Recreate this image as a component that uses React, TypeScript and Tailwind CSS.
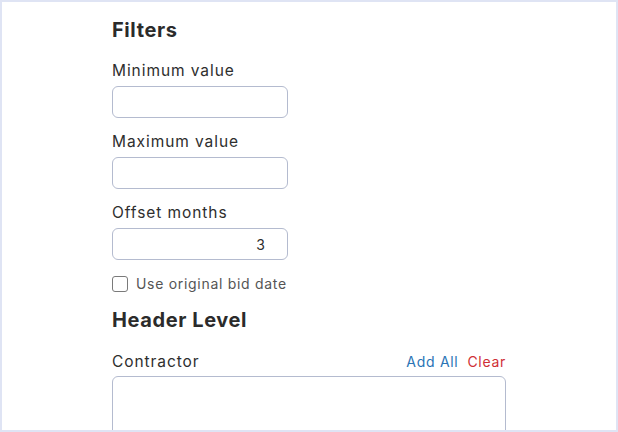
import React, { useState } from 'react';

interface NumberFieldProps {
  label: string;
  value: string;
  onChange: (v: string) => void;
  alignRight?: boolean;
}

function NumberField({ label, value, onChange, alignRight = false }: NumberFieldProps) {
  return (
    <div className="mt-4 flex flex-col">
      <label className="text-[15.5px] leading-[22px] text-[#2e2e2e] tracking-[0.06em]">{label}</label>
      <input
        value={value}
        onChange={(e) => onChange(e.target.value)}
        className={`mt-1 h-8 w-[176px] rounded-md border border-[#b4bbcf] px-3 text-sm text-[#2e2e2e] outline-none ${
          alignRight ? 'text-right pr-[22px]' : ''
        }`}
      />
    </div>
  );
}

export default function App() {
  const [minValue, setMinValue] = useState('');
  const [maxValue, setMaxValue] = useState('');
  const [offset, setOffset] = useState('3');
  const [useOriginal, setUseOriginal] = useState(false);

  return (
    <div className="h-screen overflow-hidden border-2 border-[#dfe4f4] bg-white font-['Inter',sans-serif]">
      <div className="ml-[110px] w-[394px] pt-[14px]">
        <h2 className="text-[20px] leading-[28px] font-bold text-[#2b2b2b] tracking-[0.03em]">Filters</h2>

        <div className="mt-[1px]">
          <NumberField label="Minimum value" value={minValue} onChange={setMinValue} />
        </div>
        <div className="-mt-[3px]">
          <NumberField label="Maximum value" value={maxValue} onChange={setMaxValue} />
        </div>
        <div className="-mt-[3px]">
          <NumberField label="Offset months" value={offset} onChange={setOffset} alignRight />
        </div>

        <label className="mt-[14px] flex items-center gap-2 text-sm text-[#555] tracking-[0.05em]">
          <input
            type="checkbox"
            checked={useOriginal}
            onChange={(e) => setUseOriginal(e.target.checked)}
            className="h-4 w-4 appearance-none rounded-[3px] border border-[#7a7a7a] bg-white"
          />
          Use original bid date
        </label>

        <h2 className="mt-[12px] text-[20px] leading-[28px] font-bold text-[#2b2b2b] tracking-[0.03em]">
          Header Level
        </h2>

        <div className="mt-[17px] flex items-center justify-between">
          <span className="text-[15.5px] leading-[22px] text-[#2e2e2e] tracking-[0.06em]">Contractor</span>
          <div className="flex gap-[9px] text-sm tracking-[0.05em]">
            <button className="text-[#2a74b5]">Add All</button>
            <button className="text-[#cf2f36]">Clear</button>
          </div>
        </div>
        <textarea className="mt-[3px] h-[120px] w-full resize-none rounded-md border border-[#b4bbcf] outline-none" />
      </div>
    </div>
  );
}
